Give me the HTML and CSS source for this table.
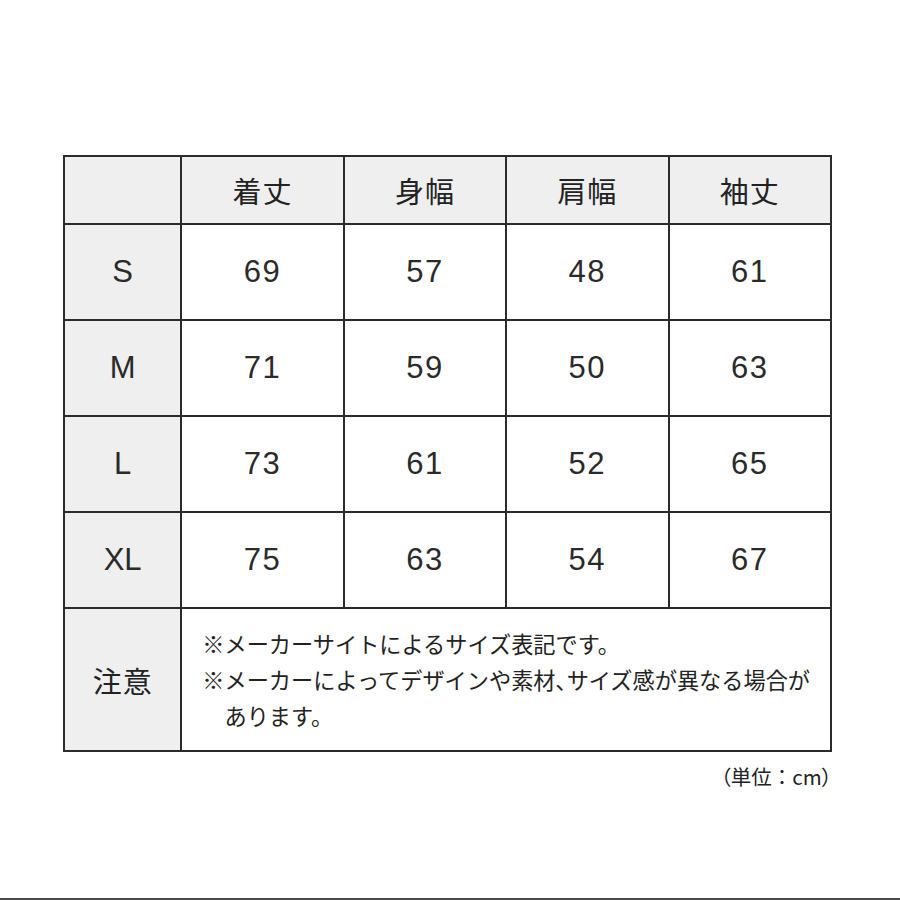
FILE: index.html
```html
<!DOCTYPE html>
<html lang="ja">
<head>
<meta charset="utf-8">
<title>サイズ表</title>
<link rel="stylesheet" href="styles.css">
</head>
<body>
<div class="page">
  <div class="sheet">
    <table class="size-table">
      <colgroup>
        <col class="c-label">
        <col class="c-val">
        <col class="c-val">
        <col class="c-val">
        <col class="c-val">
      </colgroup>
      <thead>
        <tr class="head-row">
          <th class="corner"></th>
          <th>着丈</th>
          <th>身幅</th>
          <th>肩幅</th>
          <th>袖丈</th>
        </tr>
      </thead>
      <tbody>
        <tr class="data-row">
          <th class="size">S</th>
          <td>69</td><td>57</td><td>48</td><td>61</td>
        </tr>
        <tr class="data-row">
          <th class="size">M</th>
          <td>71</td><td>59</td><td>50</td><td>63</td>
        </tr>
        <tr class="data-row">
          <th class="size">L</th>
          <td>73</td><td>61</td><td>52</td><td>65</td>
        </tr>
        <tr class="data-row">
          <th class="size">XL</th>
          <td>75</td><td>63</td><td>54</td><td>67</td>
        </tr>
        <tr class="note-row">
          <th class="note-label">注意</th>
          <td class="note" colspan="4">
            <p class="note-line">※メーカーサイトによるサイズ表記です。</p>
            <p class="note-line">※メーカーによってデザインや素材<span class="palt">、</span>サイズ感が異なる場合が<br>あります。</p>
          </td>
        </tr>
      </tbody>
    </table>
    <p class="unit"><span class="palt">（</span>単位：cm<span class="palt">）</span></p>
  </div>
</div>
</body>
</html>
```

FILE: styles.css
```css
html, body {
  margin: 0;
  padding: 0;
  background: #ffffff;
}

.page {
  width: 900px;
  height: 900px;
  box-sizing: border-box;
  border-bottom: 2px solid #4a4a4a;
  padding-top: 155px;
  padding-left: 63px;
  font-family: "Liberation Sans", "Noto Sans CJK JP", sans-serif;
  color: #222222;
}

.sheet {
  width: 769px;
}

.size-table {
  width: 769px;
  border-collapse: collapse;
  table-layout: fixed;
}

.c-label { width: 117px; }
.c-val { width: 162px; }

.size-table th,
.size-table td {
  border: 2px solid #2b2b2b;
  padding: 0;
  text-align: center;
  vertical-align: middle;
  font-weight: normal;
}

.head-row {
  height: 68px;
}

.head-row th {
  background: #efefef;
  font-family: "Noto Sans CJK JP", sans-serif;
  font-size: 29px;
  letter-spacing: 1px;
}

.data-row {
  height: 96px;
}

.data-row td {
  font-size: 31px;
  letter-spacing: 1.5px;
  background: #ffffff;
  color: #2a2a2a;
}

.size {
  background: #efefef;
  font-size: 31px;
  color: #2a2a2a;
}

.note-row {
  height: 143px;
}

.note-label {
  background: #efefef;
  font-family: "Noto Sans CJK JP", sans-serif;
  font-size: 29px;
  letter-spacing: 1px;
}

.size-table td.note {
  text-align: left;
  padding: 0 0 2px 20px;
  font-family: "Noto Sans CJK JP", sans-serif;
  font-size: 22.2px;
  line-height: 36px;
}

.note-line {
  margin: 0;
  padding-left: 1em;
  text-indent: -1em;
  white-space: nowrap;
}

.palt {
  font-feature-settings: "palt";
}

.unit {
  margin: 12px 0 0 0;
  text-align: right;
  font-family: "Noto Sans CJK JP", sans-serif;
  font-size: 20.5px;
  line-height: 24px;
  padding-right: 0;
}
```
